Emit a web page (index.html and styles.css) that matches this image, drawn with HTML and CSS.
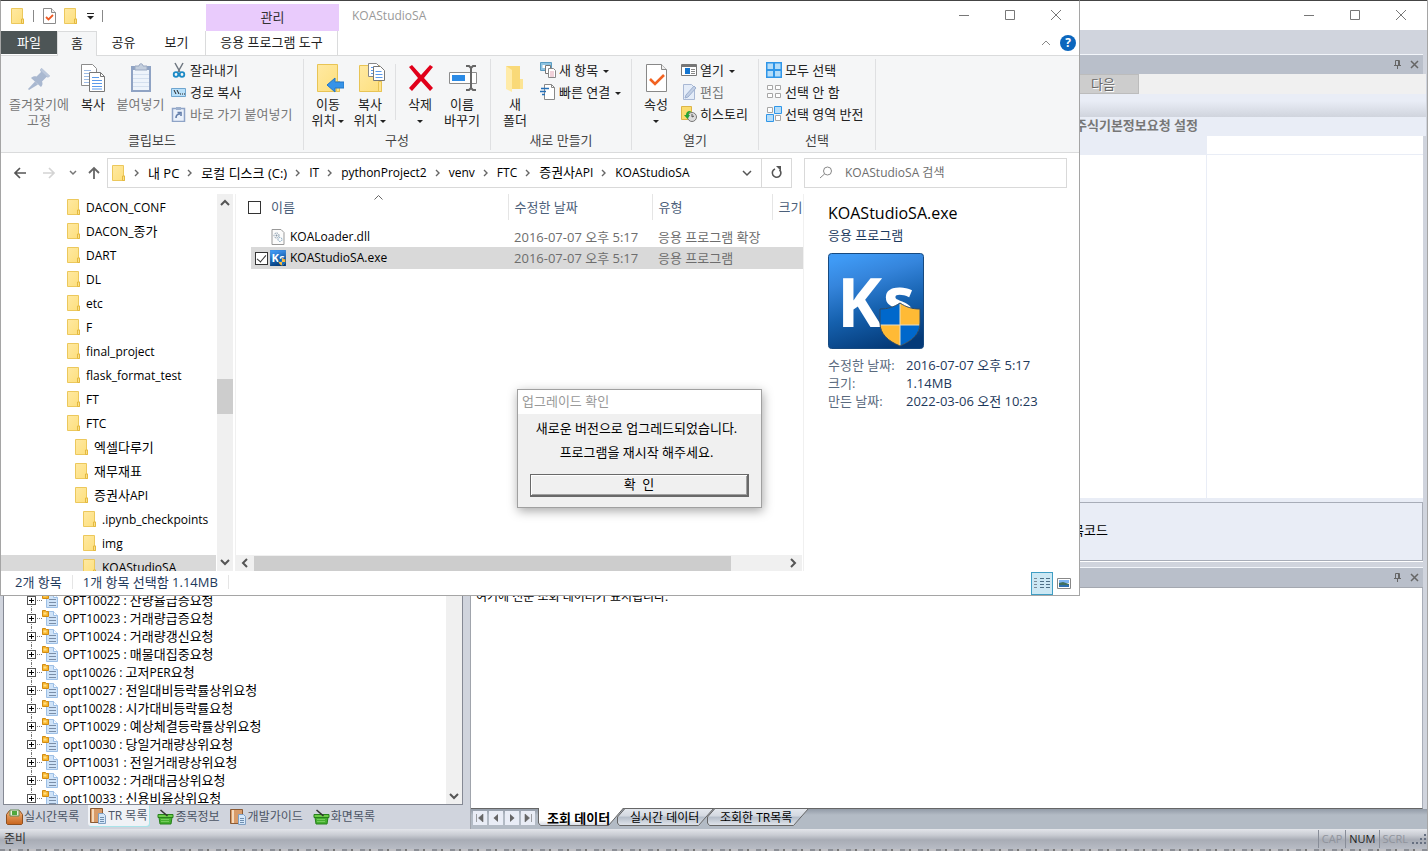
FILE: index.html
```html
<!DOCTYPE html>
<html lang="ko">
<head>
<meta charset="utf-8">
<title>KOAStudioSA</title>
<link rel="stylesheet" href="styles.css">
</head>
<body>
<svg class="sprite" aria-hidden="true">
  <defs>
    <linearGradient id="g-folder" x1="0" y1="0" x2="1" y2="1"><stop offset="0" stop-color="#ffe9a2"/><stop offset="1" stop-color="#fddf7c"/></linearGradient>
    <linearGradient id="g-ks" x1="0.3" y1="0" x2="0.6" y2="1"><stop offset="0" stop-color="#3f9af5"/><stop offset="0.25" stop-color="#3585dc"/><stop offset="0.6" stop-color="#1560ad"/><stop offset="1" stop-color="#043a78"/></linearGradient>
    <linearGradient id="g-tab" x1="0" y1="0" x2="0" y2="1"><stop offset="0" stop-color="#e4e8ee"/><stop offset="0.45" stop-color="#d3d8e0"/><stop offset="0.5" stop-color="#b3bcc8"/><stop offset="1" stop-color="#e2e6ec"/></linearGradient>
    <linearGradient id="g-tabon" x1="0" y1="0" x2="0" y2="1"><stop offset="0" stop-color="#fff"/><stop offset="0.7" stop-color="#fff"/><stop offset="1" stop-color="#d5dae3"/></linearGradient>
    <linearGradient id="g-orange" x1="0" y1="0" x2="0" y2="1"><stop offset="0" stop-color="#f0b27a"/><stop offset="1" stop-color="#c8641c"/></linearGradient>
  </defs>
  <symbol id="folder" viewBox="0 0 14 16"><path d="M.5.5h11v10.500h1v4.500H.5z" fill="url(#g-folder)" stroke="#ecc85c"/><path d="M10.500 15.500v-4.500h2v4.500z" fill="#fbe08a" stroke="#e4b93f"/></symbol>
  <symbol id="doccheck" viewBox="0 0 13 16"><path d="M.5.5h8l4 4v11H.5z" fill="#fff" stroke="#8b8b8b"/><path d="M8.500.5v4h4" fill="#eee" stroke="#8b8b8b"/><path d="M3 9l2.500 2.500L10 7" fill="none" stroke="#ee5a24" stroke-width="1.800"/></symbol>
  <symbol id="min" viewBox="0 0 12 12"><path d="M1 6.500h10" stroke="#777"/></symbol>
  <symbol id="max" viewBox="0 0 12 12"><path d="M1.500 1.500h9v9h-9z" fill="none" stroke="#777"/></symbol>
  <symbol id="close" viewBox="0 0 12 12"><path d="M1 1l10 10M11 1L1 11" fill="none" stroke="#777"/></symbol>
  <symbol id="pin" viewBox="0 0 32 32"><path d="M18.500 5l8.500 8-2 1.500-1.500-.5-4.500 4.500c1 2 .5 4-1 5.500L8 15c1.500-1.500 3.500-2 5.500-1.500L18 9l-1-2z" fill="#a9b8d0"/><path d="M18.500 5l8.500 8-2 1.500L17 7z" fill="#bcc8db"/><path d="M12 18.500l3 3L6 27l-1-1z" fill="#a9b8d0"/></symbol>
  <symbol id="copy" viewBox="0 0 32 32"><path d="M4.500 1.500h11l4 4v17h-15z" fill="#fff" stroke="#8c8c8c"/><path d="M7 7.500h7M7 10.500h9M7 13.500h9M7 16.500h9M7 19.500h9" stroke="#9dbce6"/><path d="M12.500 9.500h11l4 4v15h-15z" fill="#fff" stroke="#777"/><path d="M23.500 9.500v4h4" fill="none" stroke="#777"/><path d="M15 14.500h7M15 17.500h10M15 20.500h10M15 23.500h10M15 26h10" stroke="#5b9aeb"/></symbol>
  <symbol id="paste" viewBox="0 0 32 32"><path d="M6 3h20v26H6z" fill="#8fa3c4"/><path d="M8 7h16v20H8z" fill="#eef4fb"/><path d="M8 11.500h16M8 15.500h16M8 19.500h16M8 23.500h16" stroke="#d4e0ef"/><path d="M10 7V3h4c0-3 4-3 4 0h4v4z" fill="#c3cedd" stroke="#9aa9c2"/></symbol>
  <symbol id="cut" viewBox="0 0 16 16"><path d="M4 1l5 9M12 1L7 10" stroke="#6d7680" stroke-width="1.500"/><circle cx="5" cy="12.500" r="2.300" fill="none" stroke="#1c8ac6" stroke-width="1.800"/><circle cx="11" cy="12.500" r="2.300" fill="none" stroke="#1c8ac6" stroke-width="1.800"/></symbol>
  <symbol id="path" viewBox="0 0 16 16"><path d="M.5 4.500h14v8H.5z" fill="#b8e0fa" stroke="#6fa5cf"/><path d="M3 6l2 4M6 6l2 4" stroke="#222"/><path d="M9 10h1M11 10h1M13 10h1" stroke="#222"/></symbol>
  <symbol id="pastelink" viewBox="0 0 16 16"><path d="M1.500 2.500h12v13h-12z" fill="#eaf1fb" stroke="#8ea3c6" stroke-width="1.500"/><path d="M5 1h5v3H5z" fill="#9db0cd"/><path d="M5 12c0-3 1-4 4-4M6.500 6.500H10V10" fill="none" stroke="#647fab" stroke-width="1.600"/></symbol>
  <symbol id="moveto" viewBox="0 0 32 32"><path d="M5.500 1.500h20v17h2v10h-22z" fill="url(#g-folder)" stroke="#e8c455"/><path d="M24.500 18.500h3v10h-3z" fill="#ffe48e" stroke="#e8c455"/><path d="M15 22l8-7v4h9v6h-9v4z" fill="#3693e8" stroke="#2376c7"/></symbol>
  <symbol id="copyto" viewBox="0 0 32 32"><path d="M5.500 2.500h20v16h2v10h-22z" fill="url(#g-folder)" stroke="#e8c455"/><path d="M24.500 18.500h3v10h-3z" fill="#ffe48e" stroke="#e8c455"/><path d="M14.500.5h8l3 3v10h-11z" fill="#fff" stroke="#888"/><path d="M19.500 3.500h7l4 4v10h-11z" fill="#fff" stroke="#777"/><path d="M17 4.500h2M17 7.500h2M17 10.500h2M21.500 8.500h6M21.500 11.500h7M21.500 14.500h7" stroke="#5b9aeb"/></symbol>
  <symbol id="delete" viewBox="0 0 32 32"><path d="M5 4l3-2 9 10 9-10 3 2-9 11 9 10-3 3-9-10-9 10-3-3 9-10z" fill="#e1001a"/></symbol>
  <symbol id="rename" viewBox="0 0 32 32"><path d="M3.500 9.500h27v11h-27z" fill="#fff" stroke="#8c8c8c"/><path d="M6 12h13v6H6z" fill="#2b8be6"/><path d="M20 3h3l2 2v20l-2 2h-3M30 3h-3l-2 2v20l2 2h3" fill="none" stroke="#666" stroke-width="2"/></symbol>
  <symbol id="newfolder" viewBox="0 0 32 32"><path d="M7 3h14v13h3v10H12z" fill="#f9d978"/><path d="M7 3l6 4v22l-6-3z" fill="#ffeba8"/><path d="M21 16h3v10h-3z" fill="#fce494"/></symbol>
  <symbol id="newitem" viewBox="0 0 16 16"><path d="M.5.5h11v8H.5z" fill="#8ec4e2" stroke="#5a9cc2"/><path d="M2.500 3h5v3h-5z" fill="#fff"/><path d="M5.500 3.500h5v8h-5z" fill="#fff" stroke="#777"/><path d="M8.500 6.500h5l2 2v7h-7z" fill="#fff" stroke="#888"/><path d="M10 10h4M10 12h4M10 14h4" stroke="#e2a3b4"/></symbol>
  <symbol id="easy" viewBox="0 0 16 16"><path d="M4.500.5h7l3 3v12h-10z" fill="#fff" stroke="#888"/><path d="M11.500.5v3h3" fill="none" stroke="#888"/><path d="M1 4.500h8M0 7.500h6M2 10.500h3" stroke="#256fb7" stroke-width="1.400"/></symbol>
  <symbol id="props" viewBox="0 0 32 32"><path d="M6.500 1.500h15l5 5v22h-20z" fill="#fff" stroke="#888"/><path d="M21.500 1.500v5h5" fill="#eee" stroke="#888"/><path d="M10 16l5 5 9-9" fill="none" stroke="#f26322" stroke-width="2.600"/></symbol>
  <symbol id="open" viewBox="0 0 16 16"><path d="M.5 2.500h15v11H.5z" fill="#fff" stroke="#777"/><path d="M1 4h14" stroke="#777" stroke-width="2"/><path d="M4 6h5v6H4z" fill="#1375d1"/><path d="M10 7.500h4M10 9.500h4M10 11.500h4" stroke="#888"/></symbol>
  <symbol id="edit" viewBox="0 0 16 16"><path d="M2.500.5h8l3 3v12h-11z" fill="#e4ecf8" stroke="#a9b8d4"/><path d="M15 4l-8 9-3 1 1-3 8-9z" fill="#c2cfe4" stroke="#9cafd0"/></symbol>
  <symbol id="history" viewBox="0 0 16 16"><path d="M.5.5h10v13H.5z" fill="#fbdc6e" stroke="#dcb548"/><circle cx="11" cy="11" r="4.500" fill="#ddd" stroke="#777"/><path d="M11 8v3l2-1" fill="none" stroke="#555"/><path d="M9 5C6 5 5 7 5 9H3l3.500 4L9 9H7.500c0-2 1-3 3-3z" fill="#27a336"/></symbol>
  <symbol id="selall" viewBox="0 0 16 16"><path d="M0 0h16v16H0z" fill="#2f96e8"/><path d="M1.500 1.500h5.500v5.500H1.500zM9 1.500h5.500v5.500H9zM1.500 9h5.500v5.500H1.500zM9 9h5.500v5.500H9z" fill="#b5ddf9"/></symbol>
  <symbol id="selnone" viewBox="0 0 16 16"><path d="M1.500 1.500h5v4h-5zM9.500 1.500h5v4h-5zM1.500 9.500h5v4h-5zM9.500 9.500h5v4h-5z" fill="#fff" stroke="#a6a6a6"/></symbol>
  <symbol id="selinv" viewBox="0 0 16 16"><path d="M1.500 1.500h5v5h-5zM9.500 9.500h5v5h-5z" fill="#fff" stroke="#a6a6a6"/><path d="M8.500.5h7v7h-7zM.5 8.500h7v7h-7z" fill="#b5ddf9" stroke="#2f96e8"/></symbol>
  <symbol id="dll" viewBox="0 0 13 16"><path d="M.5.5h9l3 3v12H.5z" fill="#fbfbfb" stroke="#999"/><circle cx="5" cy="6.500" r="2.500" fill="none" stroke="#8296a8" stroke-dasharray="1.500 .8"/><circle cx="5" cy="6.500" r="1" fill="#8296a8"/><circle cx="8.500" cy="10.500" r="2" fill="none" stroke="#7ba2bd" stroke-dasharray="1.500 .8"/></symbol>
  <symbol id="shield" viewBox="0 0 96 96"><path d="M52 56c8 0 14-2 20-6 6 4 12 6 20 6v14c0 11-8 18-20 23-12-5-20-12-20-23z" fill="#ffba35"/><path d="M72 50v22H52V56c8 0 14-2 20-6zM72 72h20c-1 10-9 16-20 21z" fill="#0068cc"/><path d="M72 50v43M52 72h40" stroke="#e8ddc0"/><path d="M52 56c8 0 14-2 20-6 6 4 12 6 20 6v14c0 11-8 18-20 23-12-5-20-12-20-23z" fill="none" stroke="#2d4a68"/></symbol>
  <symbol id="trdoc" viewBox="0 0 17 16"><path d="M4.500 1.500h7l4 4v10h-11z" fill="#cfe3f8" stroke="#9cbfe6"/><path d="M11.500 1.500v4h4" fill="#f6faff" stroke="#9cbfe6"/><path d="M7 7.500h7M7 10.500h7M7 13.500h7" stroke="#7a8ea8"/><path d="M.5.5h3l1 1h2v5h-6z" fill="#f7b52c" stroke="#d18b12"/><path d="M1.500 2.500h3v2h-3z" fill="#ffe08a"/></symbol>
  <symbol id="briefcase" viewBox="0 0 17 16"><path d="M.5 5.500l3-4h10l3 4v9l-1 1h-14l-1-1z" fill="url(#g-orange)" stroke="#8f5020"/><path d="M4 1h9v6H4z" fill="#e9f3dd" stroke="#668a55"/><path d="M6 2h5v4H6z" fill="#4fa83e"/></symbol>
  <symbol id="book" viewBox="0 0 17 16"><path d="M.5.500h12v14H.5z" fill="#d89b68" stroke="#8b5a33"/><path d="M3 1v13" stroke="#fff1dc" stroke-width="1.500"/><path d="M8.500 5.500h5l2 2v8h-7z" fill="#d4e7fa" stroke="#7f9fc2"/><path d="M10 9.500h4M10 11.500h4M10 13.500h4" stroke="#6f8eae"/></symbol>
  <symbol id="basket" viewBox="0 0 16 16"><path d="M.5 5.500h15v3h-15z" fill="#6ccc48" stroke="#27811c"/><path d="M1.500 8.500h13l-1 6.500h-11z" fill="#45b02f" stroke="#27811c"/><path d="M4 10.500h8M4 12.500h8" stroke="#a5e58c" stroke-dasharray="1 1"/><path d="M3 1l7 6" stroke="#333" stroke-width="1.600"/></symbol>
  <symbol id="dockpin" viewBox="0 0 9 9"><path d="M2.500.5h4v5h-4zM5.500 1v4M1 5.500h7M4.500 6v3" fill="none" stroke="#666"/></symbol>
  <symbol id="dockx" viewBox="0 0 9 9"><path d="M1 1l7 7M8 1L1 8" stroke="#666" stroke-width="1.500"/></symbol>
  <symbol id="up" viewBox="0 0 10 10"><path d="M1 7l4-4 4 4" fill="none" stroke="#555" stroke-width="2"/></symbol>
  <symbol id="down" viewBox="0 0 10 10"><path d="M1 3l4 4 4-4" fill="none" stroke="#555" stroke-width="2"/></symbol>
  <symbol id="left" viewBox="0 0 10 10"><path d="M7 1L3 5l4 4" fill="none" stroke="#555" stroke-width="2"/></symbol>
  <symbol id="right" viewBox="0 0 10 10"><path d="M3 1l4 4-4 4" fill="none" stroke="#555" stroke-width="2"/></symbol>
  <symbol id="chev" viewBox="0 0 6 8"><path d="M1 1l3 3-3 3" fill="none" stroke="#666" stroke-width="1.400"/></symbol>
</svg>

<main class="studio">
  <header class="studio-title">
    <button class="win-btn" aria-label="최소화"><svg width="12" height="12"><use href="#min"/></svg></button>
    <button class="win-btn" aria-label="최대화"><svg width="12" height="12"><use href="#max"/></svg></button>
    <button class="win-btn" aria-label="닫기"><svg width="12" height="12"><use href="#close"/></svg></button>
  </header>
  <div class="studio-body">
    <section class="dock-left">
      <div class="tr-box">
        <ul class="tr-list">
          <li><i class="plus"></i><svg width="17" height="16"><use href="#trdoc"/></svg><span>OPT10022 : <span class="ko">잔량율급증요청</span></span></li>
          <li><i class="plus"></i><svg width="17" height="16"><use href="#trdoc"/></svg><span>OPT10023 : <span class="ko">거래량급증요청</span></span></li>
          <li><i class="plus"></i><svg width="17" height="16"><use href="#trdoc"/></svg><span>OPT10024 : <span class="ko">거래량갱신요청</span></span></li>
          <li><i class="plus"></i><svg width="17" height="16"><use href="#trdoc"/></svg><span>OPT10025 : <span class="ko">매물대집중요청</span></span></li>
          <li><i class="plus"></i><svg width="17" height="16"><use href="#trdoc"/></svg><span>opt10026 : <span class="ko">고저</span>PER<span class="ko">요청</span></span></li>
          <li><i class="plus"></i><svg width="17" height="16"><use href="#trdoc"/></svg><span>opt10027 : <span class="ko">전일대비등락률상위요청</span></span></li>
          <li><i class="plus"></i><svg width="17" height="16"><use href="#trdoc"/></svg><span>opt10028 : <span class="ko">시가대비등락률요청</span></span></li>
          <li><i class="plus"></i><svg width="17" height="16"><use href="#trdoc"/></svg><span>OPT10029 : <span class="ko">예상체결등락률상위요청</span></span></li>
          <li><i class="plus"></i><svg width="17" height="16"><use href="#trdoc"/></svg><span>opt10030 : <span class="ko">당일거래량상위요청</span></span></li>
          <li><i class="plus"></i><svg width="17" height="16"><use href="#trdoc"/></svg><span>OPT10031 : <span class="ko">전일거래량상위요청</span></span></li>
          <li><i class="plus"></i><svg width="17" height="16"><use href="#trdoc"/></svg><span>OPT10032 : <span class="ko">거래대금상위요청</span></span></li>
          <li><i class="plus"></i><svg width="17" height="16"><use href="#trdoc"/></svg><span>opt10033 : <span class="ko">신용비율상위요청</span></span></li>
        </ul>
        <div class="tr-scroll"><svg width="10" height="10"><use href="#down"/></svg></div>
      </div>
      <nav class="dock-tabs">
        <button><svg width="17" height="16"><use href="#briefcase"/></svg>실시간목록</button>
        <button class="on"><svg width="17" height="16"><use href="#book"/></svg>TR 목록</button>
        <button><svg width="17" height="16"><use href="#basket"/></svg>종목정보</button>
        <button><svg width="17" height="16"><use href="#book"/></svg>개발가이드</button>
        <button><svg width="17" height="16"><use href="#basket"/></svg>화면목록</button>
      </nav>
    </section>
    <section class="dock-right">
      <div class="tool-gap"></div>
      <div class="caption"><svg width="9" height="9"><use href="#dockpin"/></svg><svg width="9" height="9"><use href="#dockx"/></svg></div>
      <div class="next-row"><button class="next" disabled>다음</button></div>
      <div class="shade"></div>
      <div class="prop-title"><span>주식기본정보요청 설정</span></div>
      <div class="prop-row"><span></span><span></span></div>
      <div class="prop-grid"><span></span><span></span></div>
      <div class="prop-desc"><p>종목코드</p></div>
      <div class="caption low"><svg width="9" height="9"><use href="#dockpin"/></svg><svg width="9" height="9"><use href="#dockx"/></svg></div>
      <div class="output">여기에 전문 조회 데이터가 표시됩니다.</div>
      <nav class="sheet-bar">
        <button class="step" aria-label="처음"><svg width="10" height="10"><path d="M1.500 1v8M8 1v8L3.500 5z" fill="#666" stroke="#666" stroke-width=".6"/></svg></button>
        <button class="step" aria-label="이전"><svg width="10" height="10"><path d="M7 1v8L2.500 5z" fill="#666"/></svg></button>
        <button class="step" aria-label="다음 탭"><svg width="10" height="10"><path d="M3 1v8l4.500-4z" fill="#666"/></svg></button>
        <button class="step" aria-label="마지막"><svg width="10" height="10"><path d="M8.500 1v8M2 1v8l4.500-4z" fill="#666" stroke="#666" stroke-width=".6"/></svg></button>
        <button class="sheet on"><svg viewBox="0 0 86 18" preserveAspectRatio="none"><path d="M.5 0v15l2 2.500h68L85.500 0" fill="url(#g-tabon)" stroke="#666"/></svg><span>조회 데이터</span></button>
        <button class="sheet mid-sheet"><svg viewBox="0 0 97 18" preserveAspectRatio="none"><path d="M8 .5L.5 9v6l2 2.500h79L96.500.5z" fill="url(#g-tab)" stroke="#666"/></svg><span>실시간 데이터</span></button>
        <button class="sheet"><svg viewBox="0 0 102 18" preserveAspectRatio="none"><path d="M8 .5L.5 9v6l2 2.500h84L101.500.5z" fill="url(#g-tab)" stroke="#666"/></svg><span>조회한 TR목록</span></button>
      </nav>
    </section>
  </div>
  <footer class="studio-status"><span class="ready">준비</span><span class="key">CAP</span><span class="key num">NUM</span><span class="key">SCRL</span><svg width="16" height="14"><path d="M13 3h2M9 7h2M13 7h2M5 11h2M9 11h2M13 11h2M1 11h2" stroke="#666f80" stroke-width="2"/></svg></footer>
  <div class="under-edge"></div>
</main>

<section class="explorer">
  <header class="ex-title">
    <div class="quick">
      <svg width="14" height="16"><use href="#folder"/></svg><i></i>
      <svg width="13" height="16"><use href="#doccheck"/></svg>
      <svg width="14" height="16"><use href="#folder"/></svg>
      <svg width="9" height="8"><path d="M1 1.500h7" stroke="#222"/><path d="M1 4h7L4.500 7.500z" fill="#222"/></svg><i></i>
    </div>
    <div class="context ko">관리</div>
    <div class="ex-name">KOAStudioSA</div>
    <button class="win-btn" aria-label="최소화"><svg width="12" height="12"><use href="#min"/></svg></button>
    <button class="win-btn" aria-label="최대화"><svg width="12" height="12"><use href="#max"/></svg></button>
    <button class="win-btn" aria-label="닫기"><svg width="12" height="12"><use href="#close"/></svg></button>
  </header>
  <nav class="ex-tabs">
    <button class="file">파일</button><button class="home">홈</button><button>공유</button><button>보기</button><button class="apptool">응용 프로그램 도구</button>
    <span class="help"><svg width="10" height="6"><path d="M1 5l4-4 4 4" fill="none" stroke="#888"/></svg><button aria-label="도움말">?</button></span>
  </nav>
  <div class="ribbon">
    <section class="group clip"><div class="tools">
      <button class="big off wide"><svg width="32" height="32"><use href="#pin"/></svg>즐겨찾기에<br>고정</button>
      <button class="big slim"><svg width="32" height="32"><use href="#copy"/></svg>복사</button>
      <button class="big off mid"><svg width="32" height="32"><use href="#paste"/></svg>붙여넣기</button>
      <div class="smalls"><button><svg width="16" height="16"><use href="#cut"/></svg>잘라내기</button><button><svg width="16" height="16"><use href="#path"/></svg>경로 복사</button><button class="off"><svg width="16" height="16"><use href="#pastelink"/></svg>바로 가기 붙여넣기</button></div>
    </div><h2>클립보드</h2></section>
    <section class="group org"><div class="tools">
      <button class="big"><svg width="32" height="32"><use href="#moveto"/></svg>이동<br><span class="dd">위치</span></button>
      <button class="big"><svg width="32" height="32"><use href="#copyto"/></svg>복사<br><span class="dd">위치</span></button>
      <i class="split"></i>
      <button class="big"><svg width="32" height="32"><use href="#delete"/></svg>삭제<br><span class="dd bare"></span></button>
      <button class="big"><svg width="32" height="32"><use href="#rename"/></svg>이름<br>바꾸기</button>
    </div><h2>구성</h2></section>
    <section class="group new"><div class="tools">
      <button class="big"><svg width="32" height="32"><use href="#newfolder"/></svg>새<br>폴더</button>
      <div class="smalls"><button><svg width="16" height="16"><use href="#newitem"/></svg><span class="dd">새 항목</span></button><button><svg width="16" height="16"><use href="#easy"/></svg><span class="dd">빠른 연결</span></button></div>
    </div><h2>새로 만들기</h2></section>
    <section class="group opn"><div class="tools">
      <button class="big"><svg width="32" height="32"><use href="#props"/></svg>속성<br><span class="dd bare"></span></button>
      <div class="smalls"><button><svg width="16" height="16"><use href="#open"/></svg><span class="dd">열기</span></button><button class="off"><svg width="16" height="16"><use href="#edit"/></svg>편집</button><button><svg width="16" height="16"><use href="#history"/></svg>히스토리</button></div>
    </div><h2>열기</h2></section>
    <section class="group sel"><div class="tools">
      <div class="smalls"><button><svg width="16" height="16"><use href="#selall"/></svg>모두 선택</button><button><svg width="16" height="16"><use href="#selnone"/></svg>선택 안 함</button><button><svg width="16" height="16"><use href="#selinv"/></svg>선택 영역 반전</button></div>
    </div><h2>선택</h2></section>
  </div>
  <div class="address">
    <button aria-label="뒤로"><svg width="14" height="12"><path d="M13 6H2M7 1L2 6l5 5" fill="none" stroke="#555" stroke-width="1.700"/></svg></button>
    <button class="fwd" aria-label="앞으로"><svg width="14" height="12"><path d="M1 6h11M7 1l5 5-5 5" fill="none" stroke="#d4d4d4" stroke-width="1.700"/></svg></button>
    <button class="recent" aria-label="최근"><svg width="8" height="6"><path d="M1 1l3 3 3-3" fill="none" stroke="#777" stroke-width="1.500"/></svg></button>
    <button class="upbtn" aria-label="위로"><svg width="12" height="14"><path d="M6 13V2M1 7l5-5 5 5" fill="none" stroke="#666" stroke-width="1.800"/></svg></button>
    <div class="crumbs">
      <svg width="14" height="16"><use href="#folder"/></svg>
      <svg class="c" width="6" height="8"><use href="#chev"/></svg><a href="#" class="ko">내 PC</a>
      <svg class="c" width="6" height="8"><use href="#chev"/></svg><a href="#" class="ko">로컬 디스크 (C:)</a>
      <svg class="c" width="6" height="8"><use href="#chev"/></svg><a href="#">IT</a>
      <svg class="c" width="6" height="8"><use href="#chev"/></svg><a href="#">pythonProject2</a>
      <svg class="c" width="6" height="8"><use href="#chev"/></svg><a href="#">venv</a>
      <svg class="c" width="6" height="8"><use href="#chev"/></svg><a href="#">FTC</a>
      <svg class="c" width="6" height="8"><use href="#chev"/></svg><a href="#"><span class="ko">증권사</span>API</a>
      <svg class="c" width="6" height="8"><use href="#chev"/></svg><a href="#">KOAStudioSA</a>
      <svg class="drop" width="10" height="8"><path d="M1 2l4 4 4-4" fill="none" stroke="#555" stroke-width="1.500"/></svg>
      <button class="reload" aria-label="새로 고침"><svg width="13" height="13"><path d="M9.500 3.800A4.300 4.300 0 1 1 5 3" fill="none" stroke="#555" stroke-width="1.600"/><path d="M6 0h5v5z" fill="#555"/></svg></button>
    </div>
    <label class="search"><svg width="14" height="13"><circle cx="8.500" cy="5" r="4" fill="none" stroke="#888"/><path d="M5.500 8L1 12" stroke="#888"/></svg><input type="text" placeholder="KOAStudioSA 검색" aria-label="KOAStudioSA 검색"></label>
  </div>
  <div class="ex-body">
    <ul class="tree">
      <li><svg width="14" height="16"><use href="#folder"/></svg>DACON_CONF</li>
      <li><svg width="14" height="16"><use href="#folder"/></svg><span>DACON_<span class="ko">종가</span></span></li>
      <li><svg width="14" height="16"><use href="#folder"/></svg>DART</li>
      <li><svg width="14" height="16"><use href="#folder"/></svg>DL</li>
      <li><svg width="14" height="16"><use href="#folder"/></svg>etc</li>
      <li><svg width="14" height="16"><use href="#folder"/></svg>F</li>
      <li><svg width="14" height="16"><use href="#folder"/></svg>final_project</li>
      <li><svg width="14" height="16"><use href="#folder"/></svg>flask_format_test</li>
      <li><svg width="14" height="16"><use href="#folder"/></svg>FT</li>
      <li><svg width="14" height="16"><use href="#folder"/></svg>FTC</li>
      <li class="l2 ko"><svg width="14" height="16"><use href="#folder"/></svg>엑셀다루기</li>
      <li class="l2 ko"><svg width="14" height="16"><use href="#folder"/></svg>재무재표</li>
      <li class="l2"><svg width="14" height="16"><use href="#folder"/></svg><span><span class="ko">증권사</span>API</span></li>
      <li class="l3"><svg width="14" height="16"><use href="#folder"/></svg>.ipynb_checkpoints</li>
      <li class="l3"><svg width="14" height="16"><use href="#folder"/></svg>img</li>
      <li class="l3 cur"><svg width="14" height="16"><use href="#folder"/></svg>KOAStudioSA</li>
    </ul>
    <div class="vscroll"><svg width="10" height="10"><use href="#up"/></svg><i></i><svg width="10" height="10"><use href="#down"/></svg></div>
    <div class="files">
      <svg class="sort" width="9" height="5"><path d="M.5 4.500l4-4 4 4" fill="none" stroke="#666"/></svg>
      <table>
        <colgroup><col class="c0"><col class="c1"><col class="c2"><col class="c3"><col></colgroup>
        <thead><tr><th colspan="2"><label class="all"><input type="checkbox">이름</label></th><th>수정한 날짜</th><th>유형</th><th>크기</th></tr></thead>
        <tbody>
          <tr><td></td><td><span class="name nobox"><svg width="16" height="16"><use href="#dll"/></svg>KOALoader.dll</span></td><td>2016-07-07 오후 5:17</td><td>응용 프로그램 확장</td><td></td></tr>
          <tr class="picked"><td></td><td><label class="name"><input type="checkbox" checked><svg width="16" height="16" viewBox="0 0 96 96"><rect x=".5" y=".5" width="95" height="95" rx="3" fill="url(#g-ks)" stroke="#174a80"/><text x="9" y="74" class="ks-k">K</text><text x="55" y="70" class="ks-s">s</text><use href="#shield" width="96" height="96"/></svg>KOAStudioSA.exe</label></td><td>2016-07-07 오후 5:17</td><td>응용 프로그램</td><td></td></tr>
        </tbody>
      </table>
      <div class="hscroll"><svg width="10" height="10"><use href="#left"/></svg><div><i></i></div><svg width="10" height="10"><use href="#right"/></svg></div>
    </div>
    <aside class="preview">
      <h1>KOAStudioSA.exe</h1>
      <p>응용 프로그램</p>
      <svg width="96" height="96" viewBox="0 0 96 96"><rect x=".5" y=".5" width="95" height="95" rx="3" fill="url(#g-ks)" stroke="#174a80"/><text x="9" y="74" class="ks-k">K</text><text x="55" y="70" class="ks-s">s</text><use href="#shield" width="96" height="96"/></svg>
      <dl><dt>수정한 날짜:</dt><dd>2016-07-07 오후 5:17</dd><dt>크기:</dt><dd>1.14MB</dd><dt>만든 날짜:</dt><dd>2022-03-06 오전 10:23</dd></dl>
    </aside>
  </div>
  <footer class="ex-status">
    <span>2개 항목</span><span>1개 항목 선택함 1.14MB</span>
    <button class="view on" aria-label="자세히"><svg width="16" height="14"><path d="M0 2.500h4M0 5.500h4M0 8.500h4M0 11.500h4" stroke="#7c8b96" stroke-dasharray="3 1"/><path d="M6 2.500h4M12 2.500h4M6 5.500h4M12 5.500h4M6 8.500h4M12 8.500h4M6 11.500h4M12 11.500h4" stroke="#4d6f85"/></svg></button>
    <button class="view" aria-label="큰 아이콘"><svg width="14" height="11"><path d="M.5.500h13v10H.5z" fill="#fff" stroke="#888"/><path d="M2 2h10v3H2z" fill="#7fb5f2"/><path d="M2 5l4-1 6 2v3H2z" fill="#41705f"/><path d="M2 7h10v2H2z" fill="#2f6fb0"/></svg></button>
  </footer>
</section>

<section class="dialog" role="dialog" aria-label="업그레이드 확인">
  <h2>업그레이드 확인</h2>
  <p>새로운 버전으로 업그레드되었습니다.</p>
  <p>프로그램을 재시작 해주세요.</p>
  <button>확&nbsp; 인</button>
</section>
</body>
</html>
```

FILE: styles.css
```css
* { box-sizing: border-box; }
body {
  margin: 0;
  min-height: 100vh;
  position: relative;
  overflow: hidden;
  font: 12px/18px "Open Sans", "Noto Sans CJK KR", sans-serif;
  color: #000;
}
button { font: inherit; color: inherit; background: none; border: 0; padding: 0; }
ul, dl, dd, p, h1, h2 { margin: 0; padding: 0; list-style: none; font: inherit; }
svg { flex: none; display: block; }
.sprite { position: absolute; width: 0; height: 0; }
a { color: inherit; text-decoration: none; }
input { margin: 0; font: inherit; }
.ko { font-size: 13px; }
.ks-k { font: bold 68px "Open Sans", sans-serif; fill: #fff; }
.ks-s { font: bold 64px "Open Sans", sans-serif; fill: #fff; }
.win-btn { width: 46px; height: 30px; display: flex; align-items: center; justify-content: center; }

/* KOA Studio window */
.studio { height: 100vh; display: flex; flex-direction: column; background: #d0d4dd; border-right: 1px solid #a5a5a5; }
.studio-title { height: 30px; flex: none; display: flex; justify-content: flex-end; padding-right: 3px; background: #fff; border-top: 1px solid #444; }
.studio-title .win-btn { height: 28px; }
.studio-body { flex: 1; min-height: 0; display: flex; }
.dock-left { width: 471px; flex: none; display: flex; flex-direction: column; padding: 0 7px 0 0; border-right: 1px solid #a0a4ac; }
.tr-box { flex: 1; min-height: 0; display: flex; margin-left: 3px; background: #fff; border: 1px solid #858994; border-top: 0; overflow: hidden; }
.tr-list { flex: 1; display: flex; flex-direction: column; justify-content: flex-end; margin-bottom: -3px; padding-left: 23px; }
.tr-list li { height: 18px; flex: none; display: flex; align-items: center; white-space: nowrap; position: relative; line-height: 16px; }
.tr-list li::before { content: ""; position: absolute; left: 4px; top: 0; height: 18px; border-left: 1px dotted #777; }
.tr-list svg { margin: 0 4px 0 6px; }
.plus { width: 9px; height: 9px; flex: none; position: relative; border: 1px solid #555; background: linear-gradient(#000, #000) center/5px 1px no-repeat, linear-gradient(#000, #000) center/1px 5px no-repeat, #fff; }
.plus::after { content: ""; position: absolute; left: 9px; top: 3px; width: 5px; border-top: 1px dotted #777; }
.tr-scroll { width: 16px; flex: none; display: flex; justify-content: center; align-items: flex-end; padding-bottom: 3px; background: #f0f0f0; }
.dock-tabs { height: 24px; flex: none; display: flex; gap: 6px; padding: 0 0 1px 4px; color: #4c5565; }
.dock-tabs button { display: flex; align-items: center; gap: 1px; padding: 0 2px; border-radius: 0 0 3px 3px; }
.dock-tabs .on { background: #f0f2f6; box-shadow: 1px 1px #a9e4ea; margin-left: 1px; margin-bottom: 2px; }
.dock-right { flex: 1; min-width: 0; display: flex; flex-direction: column; padding-right: 4px; }
.tool-gap { height: 24px; flex: none; }
.caption { height: 20px; flex: none; display: flex; justify-content: flex-end; align-items: center; gap: 8px; padding-right: 4px; background: #b9bfca; border-top: 1px solid #f2f5fa; }
.low { margin-top: 5px; height: 21px; border-bottom: 1px solid #a4a8b0; }
.next-row { height: 20px; flex: none; display: flex; background: #f0f0f0; margin-right: -3px; padding-left: 596px; }
.next { width: 72px; border: 1px solid #bcbcbc; background: #cdcdcd; color: #666; text-shadow: 1px 1px #fff; font-size: 13px; line-height: 14px; }
.shade { height: 23px; flex: none; margin-right: -3px; background: linear-gradient(#e9edf6 30%, #d0d4dd); }
.prop-title { height: 19px; flex: none; background: #e9edf6; color: #777; font-weight: bold; font-size: 13px; margin-right: -3px; display: flex; line-height: 16px; }
.prop-title span { width: 727px; text-align: right; }
.prop-row, .prop-grid { display: grid; grid-template-columns: 736px 1fr; background: #fff; }
.prop-row { height: 19px; flex: none; }
.prop-row span { border-bottom: 1px solid #e9edf6; }
.prop-row span:first-child { background: #e9edf6; }
.prop-grid { flex: 344 1 0; }
.prop-grid span:first-child { border-right: 1px solid #e9edf6; }
.prop-desc { height: 64px; flex: none; background: #e9edf6; padding-top: 4px; border-bottom: 1px solid #fff; }
.prop-desc p { height: 59px; border: 1px solid #a8adb8; padding: 18px 0 0 588px; font-size: 13px; }
.output { flex: 221 1 0; background: #fff; padding-left: 5px; border-bottom: 1px solid #666; border-right: 1px solid #a8adb8; }
.sheet-bar { height: 20px; flex: none; display: flex; align-items: flex-start; margin-right: -4px; padding-left: 2px; background: linear-gradient(#929ba7, #b3bbc5 30%, #b3bbc5); }
.step { width: 14px; height: 14px; margin: 2px 2px 0 0; display: flex; align-items: center; justify-content: center; background: #e9edf6; }
.sheet { position: relative; height: 18px; width: 102px; margin: -1px 0 0 -7px; text-align: left; padding: 1px 0 0 13px; white-space: nowrap; }
.mid-sheet { width: 97px; }
.sheet.on { margin-left: 1px; width: 86px; padding-left: 9px; font-weight: bold; font-size: 13px; z-index: 1; }
.sheet svg { position: absolute; inset: 0; width: 100%; height: 100%; }
.sheet span { position: relative; }
.studio-status { height: 20px; flex: none; display: flex; align-items: center; padding-left: 4px; background: linear-gradient(#e3e5ea, #c9ccd3 30%, #a8acb5 55%, #b8bcc5); color: #333; }
.ready { flex: 1; }
.key { padding: 0 3px; border-left: 1px solid #888d98; color: #8f939c; font-size: 11px; }
.num { color: #222; }
.under-edge { height: 2px; flex: none; background: repeating-linear-gradient(90deg, #8c8f96 0 5px, #b5b6ba 5px 9px, #777 9px 11px, #c0c0c4 11px 18px); }

/* File Explorer window */
.explorer {
  position: absolute;
  inset: 0 348px 255px 0;
  display: flex;
  flex-direction: column;
  background: #fff;
  border: 1px solid #a5a5a5;
  border-top-color: #444;
}
.ex-title { height: 30px; flex: none; display: flex; align-items: stretch; }
.ex-title .win-btn { height: 28px; }
.quick { width: 205px; flex: none; display: flex; align-items: center; padding-left: 10px; gap: 8px; }
.quick i { height: 12px; border-left: 1px solid #888; margin-right: 1px; }
.quick i:last-child { margin-left: -1px; }
.context { width: 133px; margin-top: 3px; background: #e9cbfc; text-align: center; line-height: 26px; color: #333; }
.ex-name { flex: 1; padding-left: 13px; line-height: 29px; color: #999; }
.ex-tabs { height: 24px; flex: none; display: flex; color: #222; font-size: 13px; line-height: 16px; }
.ex-tabs > button { width: 53px; padding-bottom: 2px; }
.ex-tabs > .file { width: 56px; height: 23px; background: #4d5556; color: #fff; }
.ex-tabs > .home { width: 40px; border: 1px solid #dadbdc; border-bottom: 0; background: #f5f6f7; margin-bottom: -1px; z-index: 1; padding-bottom: 3px; }
.ex-tabs > .apptool { width: 133px; margin-left: 2px; border: solid #dadbdc; border-width: 0 1px; }
.help { margin-left: auto; display: flex; align-items: center; gap: 9px; padding-right: 3px; }
.help button { width: 16px; height: 16px; border-radius: 8px; background: #0b66bd; color: #fff; font-weight: bold; font-size: 12px; }
.ribbon { flex: none; display: flex; padding: 3px 0 2px; background: #f5f6f7; border: solid #dadbdc; border-width: 1px 0; color: #222; font-size: 13px; }
.group { display: flex; flex-direction: column; border-right: 1px solid #dfe0e2; padding-left: 3px; }
.clip { width: 303px; }
.org { width: 187px; }
.new { width: 141px; }
.opn { width: 127px; }
.sel { width: 117px; }
.group h2 { margin: 0 3px 0 0; text-align: center; color: #444; line-height: 15px; }
.tools { height: 74px; display: flex; padding-bottom: 0; }
.group { padding-bottom: 2px; }
.big { width: 42px; align-self: flex-start; padding-top: 4px; line-height: 16px; white-space: nowrap; text-align: center; }
.big svg { margin: 0 auto 1px; }
.wide { width: 70px; }
.slim { width: 38px; }
.mid { width: 57px; }
.off { color: #777; }
.split { width: 1px; height: 56px; margin: 5px 3px 0 4px; background: #dfe0e2; }
.smalls { padding: 0 0 0 4px; }
.clip .smalls { padding-left: 2px; }
.smalls button { height: 22px; display: flex; align-items: center; gap: 3px; white-space: nowrap; }
.dd::after { content: ""; display: inline-block; vertical-align: 2px; margin-left: 5px; border: solid transparent; border-width: 3px 3px 0; border-top-color: #222; }
.big .dd::after { margin-left: 3px; }
.big .bare::after { margin-left: 0; }

.address { height: 41px; flex: none; display: flex; align-items: center; padding: 0 12px 2px; }
.address > button { width: 16px; margin-right: 13px; }
.address > .fwd { margin-right: 11px; }
.address > .recent { width: 8px; margin-right: 11px; }
.address > .upbtn { width: 12px; margin-right: 7px; }
.crumbs { flex: 1; height: 30px; display: flex; align-items: center; border: 1px solid #d9d9d9; padding-left: 4px; white-space: nowrap; }
.crumbs .c { margin: 0 8px; }
.drop { margin-left: auto; margin-right: 9px; }
.reload { width: 30px; height: 28px; border-left: 1px solid #d9d9d9; display: flex; align-items: center; justify-content: center; }
.search { width: 263px; height: 30px; flex: none; margin-left: 12px; display: flex; align-items: center; gap: 12px; padding-left: 14px; border: 1px solid #d9d9d9; }
.search input { flex: 1; min-width: 0; border: 0; outline: 0; padding: 0; background: none; }
.search input::placeholder { color: #6d6d6d; }

.ex-body { flex: 1; min-height: 0; display: flex; }
.tree { width: 216px; flex: none; overflow: hidden; padding-top: 1px; }
.tree li { height: 24px; display: flex; align-items: center; gap: 5px; padding-left: 66px; white-space: nowrap; line-height: 17px; }
.tree .l2 { padding-left: 74px; }
.tree .l3 { padding-left: 82px; }
.tree .cur { background: #d9d9d9; margin-right: 1px; }
.vscroll { width: 16px; flex: none; display: flex; flex-direction: column; align-items: center; padding: 4px 0; background: #f0f0f0; }
.vscroll i { width: 100%; height: 35px; margin: auto 0 143px; background: #cdcdcd; }
.files { flex: 1; min-width: 0; position: relative; display: flex; flex-direction: column; justify-content: space-between; margin-left: 2px; border: solid #f0f0f0; border-width: 0 1px; overflow: hidden; }
.sort { position: absolute; left: 138px; top: 1px; }
table { width: 100%; table-layout: fixed; border-collapse: collapse; white-space: nowrap; color: #6d6d6d; font-size: 13px; line-height: 16px; }
.c0 { width: 15px; }
.c1 { width: 257px; }
.c2 { width: 144px; }
.c3 { width: 120px; }
th { height: 26px; padding: 0 0 0 6px; text-align: left; font-weight: normal; color: #4c607a; border-right: 1px solid #e5e5e5; overflow: hidden; }
th:first-child { padding-left: 12px; }
th:last-child { border: 0; }
tbody::before { content: ""; display: table-row; height: 6px; }
td { height: 21px; padding: 0 0 0 6px; }
td:nth-child(2) { padding-left: 4px; }
.picked td { height: 22px; }
.picked td:not(:first-child) { background: #d9d9d9; }
.name, .all { display: flex; align-items: center; }
.name { color: #000; font-size: 12px; }
.all { gap: 10px; }
.name svg { margin: 0 4px 0 2px; }
.nobox { padding-left: 13px; }
input[type=checkbox] { appearance: none; width: 13px; height: 13px; flex: none; background: #fff; border: 1px solid #333; position: relative; }
input[type=checkbox]:checked::after { content: ""; position: absolute; left: 3px; top: 0; width: 4px; height: 8px; border: solid #333; border-width: 0 1px 1px 0; transform: rotate(40deg); }
.hscroll { height: 16px; display: flex; align-items: center; background: #f0f0f0; padding: 0 4px; margin: 0 1px 0 0; }
.hscroll div { flex: 1; height: 15px; margin: 0 4px; }
.hscroll i { display: block; width: 90%; height: 100%; background: #cdcdcd; }
.preview { width: 275px; flex: none; padding: 8px 0 0 24px; font-size: 13px; }
.preview h1 { font-size: 16px; line-height: 22px; }
.preview p { line-height: 22px; color: #1c3a5e; margin-bottom: 7px; }
.preview dl { display: grid; grid-template-columns: 78px 1fr; margin-top: 7px; line-height: 18px; color: #1e395b; }
.preview dt { color: #5a6a7e; }
.ex-status { height: 24px; flex: none; display: flex; align-items: center; padding: 0 4px; color: #1e395b; font-size: 13px; }
.ex-status span { line-height: 14px; padding: 0 10px; border-right: 1px solid #e5e5e5; margin-bottom: 2px; }
.view { height: 23px; width: 22px; display: flex; align-items: center; justify-content: center; }
.view.on { margin-left: auto; background: #cce8f4; border: 1px solid #3f9ec4; }

/* Message box */
.dialog { position: absolute; left: 517px; top: 389px; width: 245px; padding-bottom: 10px; background: #f0f0f0; border: 1px solid #a0a0a0; box-shadow: 1px 3px 10px rgba(0, 0, 0, .35); text-align: center; font-size: 13px; line-height: 24px; }
.dialog h2 { background: #fff; color: #999; text-align: left; padding: 0 0 2px 4px; line-height: 22px; margin-bottom: 2px; }
.dialog p { padding-right: 6px; }
.dialog button { display: block; width: calc(100% - 24px); height: 23px; margin: 10px 12px 0; border: 1px solid #696969; border-right-width: 2px; border-bottom-width: 2px; box-shadow: inset 1px 1px #fff, inset -1px -1px #a0a0a0; line-height: 18px; padding-bottom: 2px; }
```
